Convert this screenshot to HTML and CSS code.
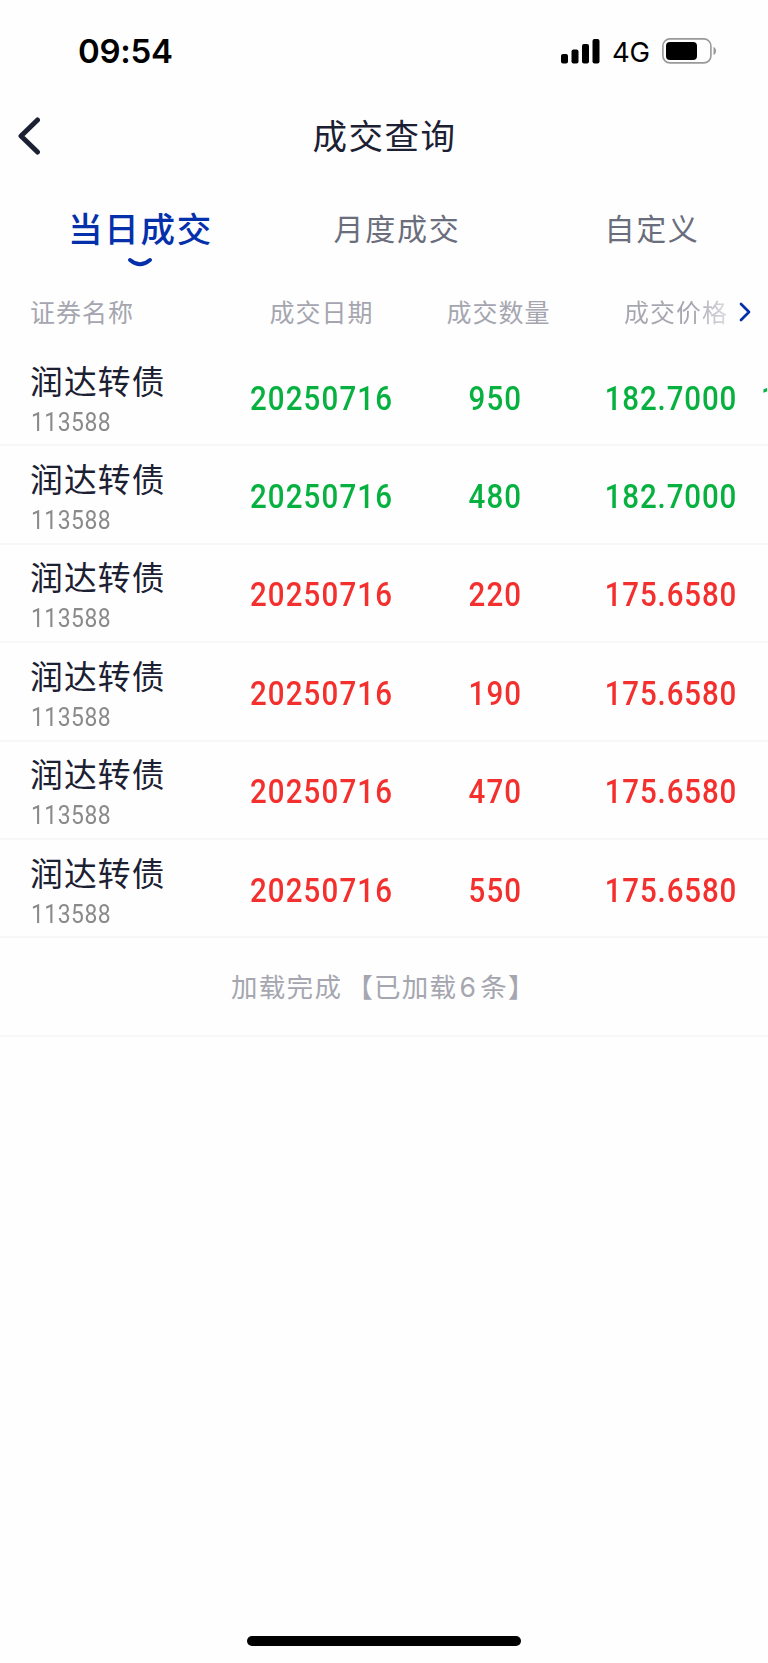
FILE: index.html
```html
<!DOCTYPE html>
<html lang="zh-CN">
<head>
	<meta charset="utf-8">
	<meta name="viewport" content="width=device-width, initial-scale=1">
	<title>成交查询</title>
	<link rel="stylesheet" href="styles.css">
</head>
<body>
	<div class="status-bar">
		<span class="time">09:54</span>
		<div class="status-icons">
			<svg class="signal" width="39" height="25" viewBox="0 0 39 25">
				<rect x="0" y="15" width="7" height="9.5" rx="2"/>
				<rect x="10.5" y="10.5" width="7" height="14" rx="2"/>
				<rect x="21" y="5" width="7" height="19.5" rx="2"/>
				<rect x="31.5" y="0" width="7" height="24.5" rx="2"/>
			</svg>
			<span class="network">4G</span>
			<svg class="battery" width="55" height="26" viewBox="0 0 55 26">
				<rect x="0.9" y="0.9" width="48" height="24" rx="7" fill="none" stroke="#999" stroke-width="1.6"/>
				<rect x="4" y="4" width="31" height="18" rx="4"/>
				<path d="M51.5 9v8c1.5-.6 2.5-2 2.5-4s-1-3.4-2.5-4z" fill="#999"/>
			</svg>
		</div>
	</div>

	<div class="nav">
		<svg class="back" width="24" height="38" viewBox="0 0 24 38">
			<path d="M20.5 3L4 19L20.5 35" fill="none" stroke="#1c2033" stroke-width="5" stroke-linecap="round" stroke-linejoin="round"/>
		</svg>
		<h1 class="title">成交查询</h1>
	</div>

	<div class="tabs">
		<div class="tab active">当日成交
			<svg class="smile" width="24" height="9" viewBox="0 0 24 9">
				<path d="M2 2Q12 10.5 22 2" fill="none" stroke="#0430ab" stroke-width="3.8" stroke-linecap="round"/>
			</svg>
		</div>
		<div class="tab month">月度成交</div>
		<div class="tab custom">自定义</div>
	</div>

	<div class="columns">
		<span class="first">证券名称</span>
		<span>成交日期</span>
		<span>成交数量</span>
		<span class="fade">成交价格</span>
		<svg class="more" width="14" height="22" viewBox="0 0 14 22">
			<path d="M3 3L11 11L3 19" fill="none" stroke="#0430ab" stroke-width="2.7" stroke-linecap="round" stroke-linejoin="round"/>
		</svg>
	</div>

	<div class="list">
		<div class="row sell">
			<div class="stock"><span class="name">润达转债</span><span class="code">113588</span></div>
			<span class="num">20250716</span>
			<span class="num qty">950</span>
			<span class="num price">182.7000</span>
			<span class="num amount">1</span>
		</div>
		<div class="row sell">
			<div class="stock"><span class="name">润达转债</span><span class="code">113588</span></div>
			<span class="num">20250716</span>
			<span class="num qty">480</span>
			<span class="num price">182.7000</span>
		</div>
		<div class="row buy">
			<div class="stock"><span class="name">润达转债</span><span class="code">113588</span></div>
			<span class="num">20250716</span>
			<span class="num qty">220</span>
			<span class="num price">175.6580</span>
		</div>
		<div class="row buy">
			<div class="stock"><span class="name">润达转债</span><span class="code">113588</span></div>
			<span class="num">20250716</span>
			<span class="num qty">190</span>
			<span class="num price">175.6580</span>
		</div>
		<div class="row buy">
			<div class="stock"><span class="name">润达转债</span><span class="code">113588</span></div>
			<span class="num">20250716</span>
			<span class="num qty">470</span>
			<span class="num price">175.6580</span>
		</div>
		<div class="row buy">
			<div class="stock"><span class="name">润达转债</span><span class="code">113588</span></div>
			<span class="num">20250716</span>
			<span class="num qty">550</span>
			<span class="num price">175.6580</span>
		</div>
		<div class="loaded">加载完成<span class="total">【已加载<span class="count">6</span>条】</span></div>
	</div>

	<div class="home-bar"></div>
</body>
</html>
```
FILE: styles.css
```css
* {
	box-sizing: border-box;
}
body {
	margin: 0;
	height: 1663px;
	display: flex;
	flex-direction: column;
	overflow: hidden;
	background: #fefefe;
	color: #1c2033;
	font-family: "Noto Sans CJK SC", sans-serif;
	white-space: nowrap;
}
svg {
	display: block;
	flex: none;
}

/* Status bar */
.status-bar {
	height: 102px;
	padding: 0 51px 0 78px;
	display: flex;
	align-items: center;
	justify-content: space-between;
	color: #000;
	font-family: Inter, sans-serif;
}
.time {
	font-size: 33px;
	font-weight: 600;
	letter-spacing: -0.3px;
}
.status-icons {
	display: flex;
	align-items: center;
}
.network {
	margin: 2px 12px 0 12px;
	width: 38px;
	font-size: 27.5px;
	font-weight: 400;
	letter-spacing: -0.2px;
}

/* Title */
.nav {
	height: 68px;
	padding: 0 17px;
	display: grid;
	grid-template-columns: 24px 1fr 24px;
	align-items: center;
}
.title {
	margin: 0;
	padding: 0 0 5px 1px;
	text-align: center;
	font-size: 34.5px;
	font-weight: 400;
	letter-spacing: 1.5px;
}

/* Tabs */
.tabs {
	height: 118px;
	display: grid;
	grid-template-columns: 280px 233px 255px;
}
.tab {
	height: 118px;
	line-height: 115px;
	text-align: center;
	font-size: 30px;
	letter-spacing: 1.7px;
	color: #6a6d7c;
}
.tab.active {
	position: relative;
	padding-left: 1px;
	font-size: 34.5px;
	font-weight: 500;
	color: #0430ab;
}
.smile {
	position: absolute;
	left: 128px;
	top: 88px;
}
.tab.month {
	padding-left: 1px;
}
.tab.custom {
	padding-left: 23px;
}

/* Table */
.columns, .row {
	display: grid;
	grid-template-columns: 233px 177px 177px 174px 1fr;
	align-items: center;
	text-align: center;
}
.columns {
	position: relative;
	height: 60px;
	padding-bottom: 14px;
	font-size: 25px;
	letter-spacing: 1px;
	color: #a5a6b0;
}
.first {
	padding-left: 30px;
	text-align: left;
}
.fade {
	padding-left: 4px;
	background: linear-gradient(90deg, #a5a6b0 0, #a5a6b0 105px, #e2e2e6 144px);
	-webkit-background-clip: text;
	color: transparent;
}
.more {
	position: absolute;
	left: 738px;
	top: 13px;
}
.row {
	height: 98.4px;
	border-bottom: 2px solid #f7f7f8;
}
.stock {
	padding: 9px 0 0 30px;
	display: flex;
	flex-direction: column;
	text-align: left;
	color: #1c2033;
}
.name {
	font-size: 32.8px;
	line-height: 42px;
	letter-spacing: 1.1px;
}
.code {
	padding-left: 1px;
	font-family: Roboto, sans-serif;
	font-size: 26px;
	line-height: 42px;
	letter-spacing: 0.6px;
	color: #8a8a8a;
	transform: scaleX(0.88);
	transform-origin: left;
}
/* narrow figures with open spacing */
.num {
	padding-top: 4px;
	font-family: Roboto, sans-serif;
	font-size: 33.5px;
	font-weight: 500;
	letter-spacing: 1.3px;
	transform: scaleX(0.88);
}
.qty {
	padding-right: 7px;
}
.price {
	padding-right: 7px;
	letter-spacing: 1px;
}
.amount {
	width: 7px;
	overflow: hidden;
	text-align: left;
	transform-origin: left;
}
.sell {
	color: #06b13f;
}
.buy {
	color: #f3302e;
}
.loaded {
	height: 98.4px;
	padding-left: 231px;
	line-height: 96px;
	border-bottom: 2px solid #f7f7f8;
	font-size: 26.5px;
	letter-spacing: 1.3px;
	color: #a5a6b0;
}
.total {
	margin-left: 4px;
}
.count {
	margin: 0 3px 0 2px;
	font-family: Inter, sans-serif;
}

/* Home indicator */
.home-bar {
	width: 274px;
	height: 10px;
	margin: auto auto 17px;
	border-radius: 5px;
	background: #000;
}
```
